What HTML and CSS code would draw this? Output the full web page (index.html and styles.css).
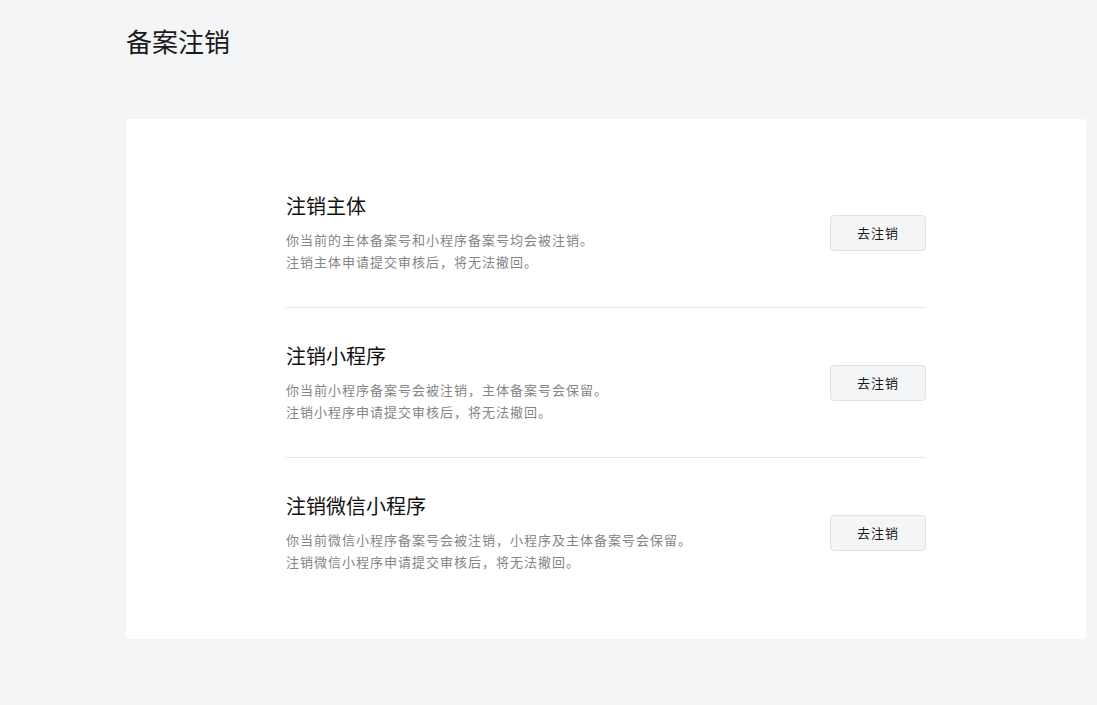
FILE: index.html
```html
<!DOCTYPE html>
<html lang="zh-CN">
<head>
    <meta charset="UTF-8">
    <meta name="viewport" content="width=device-width, initial-scale=1.0">
    <title>备案注销</title>
    <link rel="stylesheet" href="styles.css">
</head>
<body>
    <div class="page">
        <h1 class="page-title">备案注销</h1>

        <div class="card">
            <div class="cancel-list">
                <div class="cancel-item">
                    <div class="cancel-info">
                        <h3>注销主体</h3>
                        <p>你当前的主体备案号和小程序备案号均会被注销。</p>
                        <p>注销主体申请提交审核后，将无法撤回。</p>
                    </div>
                    <button class="btn">去注销</button>
                </div>

                <div class="cancel-item">
                    <div class="cancel-info">
                        <h3>注销小程序</h3>
                        <p>你当前小程序备案号会被注销，主体备案号会保留。</p>
                        <p>注销小程序申请提交审核后，将无法撤回。</p>
                    </div>
                    <button class="btn">去注销</button>
                </div>

                <div class="cancel-item">
                    <div class="cancel-info">
                        <h3>注销微信小程序</h3>
                        <p>你当前微信小程序备案号会被注销，小程序及主体备案号会保留。</p>
                        <p>注销微信小程序申请提交审核后，将无法撤回。</p>
                    </div>
                    <button class="btn">去注销</button>
                </div>
            </div>
        </div>
    </div>
</body>
</html>
```

FILE: styles.css
```css
body {
    margin: 0;
    background-color: #f4f5f7;
    color: #1a1a1a;
    font-family: "Noto Sans CJK SC", "Noto Sans", "Liberation Sans", sans-serif;
}
.page {
    padding: 23px 0 40px 126px;
}
.page-title {
    margin: 0;
    font-size: 26px;
    line-height: 36px;
    font-weight: 400;
    color: #1a1a1a;
}
.card {
    width: 960px;
    margin-top: 60px;
    background: #fff;
    border-radius: 4px;
    padding: 39px 0 32px;
    box-sizing: border-box;
}
.cancel-list {
    width: 640px;
    margin: 0 auto;
}
.cancel-item {
    display: flex;
    align-items: center;
    justify-content: space-between;
    padding: 34px 0;
    border-bottom: 1px solid #e8e8e8;
}
.cancel-item:last-child {
    border-bottom: none;
}
.cancel-info h3 {
    margin: 0 0 9px;
    font-size: 20px;
    line-height: 28px;
    font-weight: 400;
    color: #111;
}
.cancel-info p {
    margin: 0;
    font-size: 13px;
    line-height: 22px;
    letter-spacing: 1px;
    color: #858585;
}
.btn {
    width: 96px;
    height: 36px;
    background: #f4f5f7;
    border: 1px solid #dfe1e5;
    border-radius: 4px;
    font-family: inherit;
    font-size: 13px;
    letter-spacing: 1px;
    color: #1a1a1a;
    cursor: pointer;
}
```
